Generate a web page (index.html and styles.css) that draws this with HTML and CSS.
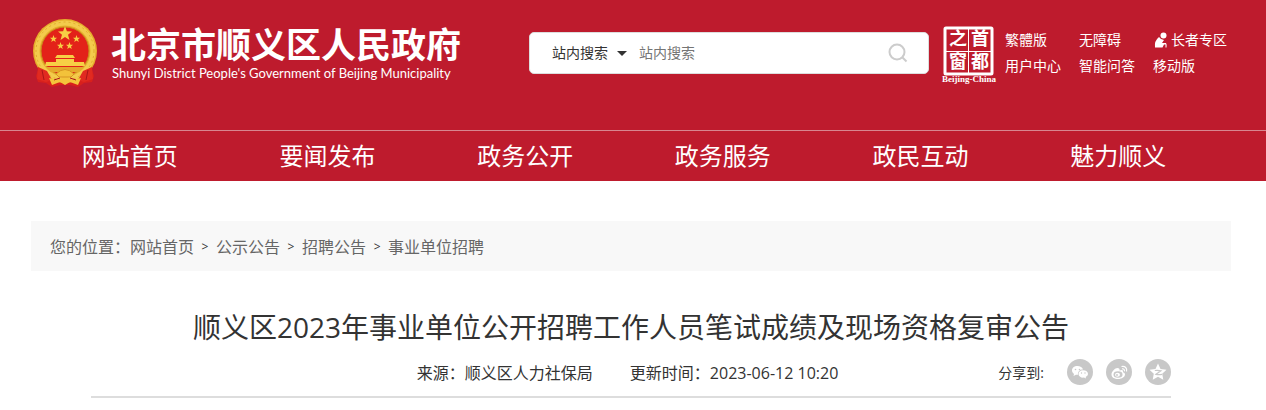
FILE: index.html
```html
<!DOCTYPE html>
<html lang="zh-CN">
<head>
  <meta charset="UTF-8" />
  <meta name="viewport" content="width=device-width, initial-scale=1.0"/>
  <title>顺义区2023年事业单位公开招聘工作人员笔试成绩及现场资格复审公告</title>
  <link rel="stylesheet" href="styles.css">
</head>
<body>
  <header class="header">
    <div class="wrap top">
      <a class="logo" href="#">
        <svg class="emblem" width="66" height="70" viewBox="0 0 66 70" aria-hidden="true">
          <path d="M8 46 L4 58 L6 64 L14 65 L20 69 L28 67 H38 L46 69 L52 65 L60 64 L62 58 L58 46 Z" fill="#d8201c"/>
          <circle cx="33" cy="33" r="32" fill="#e6ae2c"/>
          <circle cx="33" cy="33" r="28" fill="none" stroke="#f3cb4c" stroke-width="5"/>
          <circle cx="33" cy="33" r="29" fill="none" stroke="#e2aa2c" stroke-dasharray="2 3"/>
          <circle cx="33" cy="33" r="24" fill="#e32219" stroke="#c98a1c"/>
          <g fill="#f7cf45">
            <path id="star" d="M33 8 L34.900 13.300 L40 13.400 L36 16.800 L37.500 22 L33 18.900 L28.500 22 L30 16.800 L26 13.400 L31.100 13.300 Z"/>
            <use href="#star" transform="translate(5 13) scale(.5)"/>
            <use href="#star" transform="translate(28 13) scale(.5)"/>
            <use href="#star" transform="translate(12 20) scale(.5)"/>
            <use href="#star" transform="translate(21 20) scale(.5)"/>
            <path d="M25 37 H41 L43 40 H23 Z M24 41 H42 V44 H52 L53 48 H13 L14 44 H24 Z"/>
          </g>
          <path d="M14 49 H52 L47 54 H19 Z" fill="#e5a92c"/>
          <path d="M6 49 L15 53 L20 62 L14 64 L5 61 Z M60 49 L51 53 L46 62 L52 64 L61 61 Z" fill="#e12a20"/>
          <path d="M17 60 L27 62 L33 57 L39 62 L49 60 L46 67 L38 64 L33 67 L28 64 L20 67 Z" fill="#f4c53b"/>
          <path d="M24 56 Q33 47 42 56 L39 59 H27 Z" fill="#f3c23a" stroke="#d79422"/>
          <path d="M10 52 L12 62 M56 52 L54 62 M22 62 L28 60 M44 62 L38 60" stroke="#a91518" fill="none"/>
        </svg>
        <span class="logo-text">
          <span class="logo-cn">北京市顺义区人民政府</span>
          <span class="logo-en">Shunyi District People's Government of Beijing Municipality</span>
        </span>
      </a>

      <form class="search">
        <select class="search-type" aria-label="搜索范围">
          <option>站内搜索</option>
        </select>
        <svg class="caret" width="10" height="5" viewBox="0 0 10 5" aria-hidden="true"><path d="M0 0 H10 L5 5 Z" fill="#333"/></svg>
        <input class="search-input" type="text" placeholder="站内搜索" aria-label="站内搜索">
        <button class="search-btn" type="button" aria-label="搜索">
          <svg width="20" height="20" viewBox="0 0 20 20" fill="none" stroke="#ccc" stroke-width="2"><circle cx="9" cy="9" r="7.500"/><path d="M14.500 14.500 L18.500 18.500"/></svg>
        </button>
      </form>

      <a class="window" href="#" aria-label="首都之窗">
        <svg width="56" height="60" viewBox="0 0 56 60">
          <rect x="4" y="3" width="47" height="46" rx="1" fill="none" stroke="#fff" stroke-width="3"/>
          <path d="M27.500 4 V48 M5 26.500 H50" stroke="#fff"/>
          <g class="window-cn">
            <text x="8" y="20">之</text>
            <text x="30" y="20">首</text>
            <text x="8" y="43">窗</text>
            <text x="30" y="43">都</text>
          </g>
          <text class="window-en" x="28" y="57">Beijing-China</text>
        </svg>
      </a>

      <div class="links">
        <a href="#">繁體版</a>
        <a href="#">无障碍</a>
        <a href="#"><svg class="elder" width="14" height="16" viewBox="0 0 14 16" fill="#fff" aria-hidden="true"><circle cx="9.500" cy="3.500" r="3"/><path d="M5 5 Q7 8 10 8 L8 11 H12 Q13 12 12.500 15.500 H11.500 V12.500 H10 L8.500 15.500 H1 Q0 9 5 5 Z"/></svg>长者专区</a>
        <a href="#">用户中心</a>
        <a href="#">智能问答</a>
        <a href="#">移动版</a>
      </div>
    </div>

    <nav class="nav">
      <div class="wrap">
        <div class="nav-list">
          <a href="#">网站首页</a>
          <a href="#">要闻发布</a>
          <a href="#">政务公开</a>
          <a href="#">政务服务</a>
          <a href="#">政民互动</a>
          <a href="#">魅力顺义</a>
        </div>
      </div>
    </nav>
  </header>

  <main class="wrap">
    <div class="crumbs">
      <span>您的位置：</span><a href="#">网站首页</a><i>&gt;</i><a href="#">公示公告</a><i>&gt;</i><a href="#">招聘公告</a><i>&gt;</i><a href="#">事业单位招聘</a>
    </div>

    <article class="article">
      <h1>顺义区2023年事业单位公开招聘工作人员笔试成绩及现场资格复审公告</h1>
      <div class="meta">
        <span class="source">来源：顺义区人力社保局</span>
        <span class="time">更新时间：2023-06-12 10:20</span>
        <div class="share">
          <span>分享到:</span>
          <a href="#" aria-label="微信">
            <svg width="26" height="26" viewBox="0 0 26 26"><circle cx="13" cy="13" r="13" fill="#c8c8c8"/><path d="M10.500 7 C7 7 5 9 5 11.500 C5 13 6 14.300 7 15 L6.500 17 L9 15.800 H11 C10.500 12.500 13 10.500 16 10.500 C15.500 8.500 13 7 10.500 7 Z M16 11.300 C13 11.300 11.500 13.200 11.500 15 C11.500 17.300 14 19 17 18.600 L19 19.500 L18.700 18 C20 17.200 21 16.200 21 15 C21 13 19 11.300 16 11.300 Z" fill="#fff"/><g fill="#c8c8c8"><circle cx="8.500" cy="10.500" r=".8"/><circle cx="12.500" cy="10.500" r=".8"/><circle cx="14.500" cy="14" r=".7"/><circle cx="18" cy="14" r=".7"/></g></svg>
          </a>
          <a href="#" aria-label="微博">
            <svg width="26" height="26" viewBox="0 0 26 26"><circle cx="13" cy="13" r="13" fill="#c8c8c8"/><path d="M11.500 9 C9 9 5.500 12.500 5.500 15.500 C5.500 18.500 8.500 20 12 20 C16 20 19 17.700 19 15.500 C19 14 18 13.500 17 13.200 C17.500 11 16 10.500 13.500 11.500 C14 10 13 9 11.500 9 Z" fill="#fff"/><ellipse cx="12" cy="15.500" rx="4.500" ry="3.200" fill="#c8c8c8"/><ellipse cx="11.500" cy="15.800" rx="2.500" ry="2" fill="#fff"/><circle cx="11" cy="16" r=".9" fill="#c8c8c8"/><path d="M15.500 7.500 C19 6.500 21.500 9.500 20.500 12.500 M16 9.800 C17.800 9.500 18.900 10.800 18.400 12.200" fill="none" stroke="#fff" stroke-width="1.200"/></svg>
          </a>
          <a href="#" aria-label="QQ空间">
            <svg width="26" height="26" viewBox="0 0 26 26"><circle cx="13" cy="13" r="13" fill="#c8c8c8"/><path d="M13 4.500 L15.500 10 L21.500 10.700 L17.200 14.700 L18.300 20.700 L13 17.800 L7.700 20.700 L8.800 14.700 L4.500 10.700 L10.500 10 Z" fill="#fff"/><path d="M9.800 11.500 Q13 11 16 11.800 L11 15.300 Q14 16 17 15.300" fill="none" stroke="#c8c8c8" stroke-width="1.200"/></svg>
          </a>
        </div>
      </div>
    </article>
  </main>
</body>
</html>
```
FILE: styles.css
```css
body { margin: 0; background: #fff; color: #333; font-family: "Open Sans", "Noto Sans CJK SC", sans-serif; }
a { color: inherit; text-decoration: none; }
svg { display: block; }
.wrap { max-width: 1200px; margin: 0 auto; padding: 0 35px 0 31px; }

/* header */
.header { background: #be1b2d; color: #fff; }
.top { display: flex; align-items: flex-start; height: 130px; }
.logo { display: flex; padding-top: 18px; margin-left: 1px; }
.logo-text { display: flex; flex-direction: column; margin-left: 13px; padding-top: 4px; white-space: nowrap; }
.logo-cn { font: bold 35px/42px "Noto Sans CJK SC", sans-serif; }
.logo-en { font: 13px/18px Lato, sans-serif; padding-left: 1px; }

.search {
  display: flex;
  align-items: center;
  width: 400px;
  height: 42px;
  margin: 32px 0 0 auto;
  padding: 0 20px 0 22px;
  box-sizing: border-box;
  background: #fff;
  border: 1px solid #ddd;
  border-radius: 5px;
}
.search-type, .search-input { padding: 0; border: none; background: none; outline: none; font: 14px/20px "Open Sans", "Noto Sans CJK SC", sans-serif; }
.search-type { width: 56px; appearance: none; color: #333; }
.caret { margin: 0 12px 0 9px; }
.search-input { flex: 1; min-width: 0; color: #333; }
.search-input::placeholder { color: #757575; }
.search-btn { padding: 0; border: none; background: none; cursor: pointer; }

.window { margin: 25px 0 0 12px; }
.window-cn { fill: #fff; font: bold 18px "Noto Sans CJK SC", sans-serif; }
.window-en { fill: #fff; font: bold 9px "Liberation Serif", serif; text-anchor: middle; }

.links { display: grid; grid-template-columns: repeat(3, 74px); margin: 27px 4px 0 8px; font-size: 14px; line-height: 26px; white-space: nowrap; }
.links a { display: flex; align-items: center; }
.elder { margin: 0 3px 0 1px; }

/* menu */
.nav { border-top: 1px solid #d8868f; }
.nav-list { display: grid; grid-template-columns: repeat(6, 1fr); margin-right: 14px; font-size: 24px; line-height: 50px; text-align: center; }

/* content */
.crumbs { display: flex; align-items: center; height: 50px; margin-top: 40px; padding: 0 19px; background: #f8f8f8; color: #666; font-size: 16px; }
.crumbs i { width: 22px; color: #333; font-size: 12px; font-style: normal; text-align: center; }

.article { margin: 0 60px; border-bottom: 2px solid #ddd; }
.article h1 { margin: 36px 0 0; font-size: 28px; font-weight: normal; line-height: 40px; text-align: center; }
.meta { display: flex; align-items: center; justify-content: flex-end; height: 49px; font-size: 16px; }
.source { margin-right: 37px; }
.share { display: flex; align-items: center; margin-left: 160px; font-size: 14px; }
.share a { margin-left: 13px; }
.share span { margin-right: 10px; }
```
